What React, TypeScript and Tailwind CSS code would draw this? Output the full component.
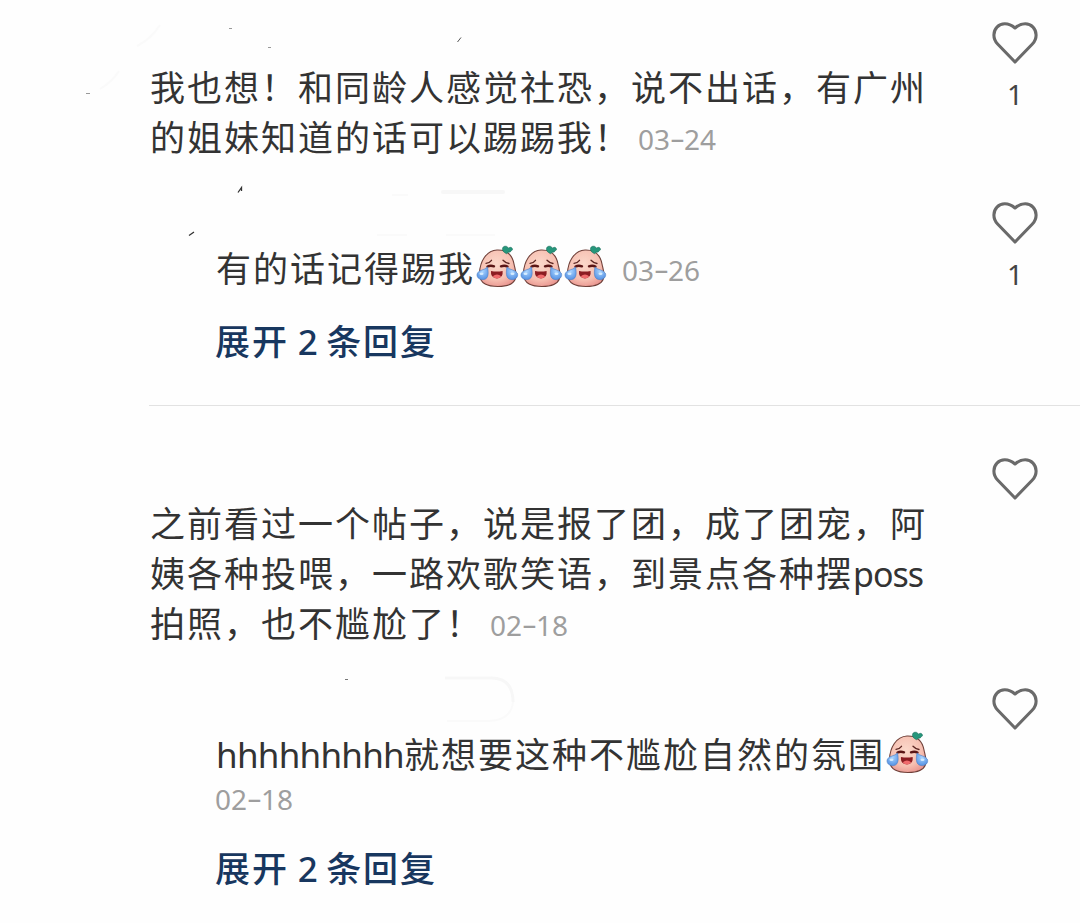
import type { ReactNode } from "react";

const COMMENTS = [
  {
    id: "1",
    lines: ["我也想！和同龄人感觉社恐，说不出话，有广州", "的姐妹知道的话可以踢踢我！"],
    date: "03-24",
    likes: 1,
    reply: { text: "有的话记得踢我", laughs: 3, date: "03-26", dateBelow: false, likes: 1, more: 2 },
  },
  {
    id: "2",
    lines: ["之前看过一个帖子，说是报了团，成了团宠，阿", "姨各种投喂，一路欢歌笑语，到景点各种摆poss", "拍照，也不尴尬了！"],
    date: "02-18",
    likes: 0,
    reply: { text: "hhhhhhhhh就想要这种不尴尬自然的氛围", laughs: 1, date: "02-18", dateBelow: true, likes: 0, more: 2 },
  },
];

function HeartIcon() {
  return (
    <svg width="46" height="43" viewBox="0 0 46 43" fill="none" className="block">
      <path
        d="M23 7 C19.800 4.200 16.500 2.800 12.800 2.800 C6.500 2.800 1.900 7.800 1.900 14 C1.900 17.600 3.300 20.600 5.600 23 L23 41 L40.400 23 C42.700 20.600 44.100 17.600 44.100 14 C44.100 7.800 39.500 2.800 33.200 2.800 C29.500 2.800 26.200 4.200 23 7 Z"
        stroke="#6a6a6a"
        strokeWidth="3.1"
        strokeLinejoin="round"
      />
    </svg>
  );
}

function LaughCry() {
  return (
    <svg width="44" height="44" viewBox="0 0 44 44" className="block shrink-0">
      <defs>
        <radialGradient id="skin" cx="45%" cy="38%" r="68%">
          <stop offset="0" stopColor="#fbd8ca" />
          <stop offset=".65" stopColor="#f6bfb1" />
          <stop offset="1" stopColor="#e8918c" />
        </radialGradient>
        <radialGradient id="tear" cx="50%" cy="35%" r="65%">
          <stop offset="0" stopColor="#a9d4ff" />
          <stop offset="1" stopColor="#5592e4" />
        </radialGradient>
      </defs>
      <path d="M3.500 28 C4 17 10 5.500 21 5 C32 4.600 36.500 11 38 19 C39 24 41 29 39.500 33.500 C37.500 39.500 30 41.500 22 41.500 C13 41.500 3 39.500 3.500 28Z" fill="url(#skin)" stroke="#70413a" strokeWidth="1.1" />
      <path d="M28.500 7.500 C25.500 5.500 26 1.500 29 1.200 C31.300 1 32 2.500 32.500 3.200 C34.500 1.500 36.500 2.500 36.500 4.700 C35.500 5 35 7.500 32.500 7.200 L30.500 8.700Z" fill="#26967b" stroke="#176b59" strokeWidth=".6" />
      <path d="M10 18.300 Q13.500 18 15.500 15.300 M27 15.300 Q29.500 18 33 18.500" stroke="#5b2420" strokeWidth="1.300" fill="none" strokeLinecap="round" />
      <path d="M11.500 21.500 Q14.500 20 18 21.300 M25 21.300 Q28.500 20 31.500 21.500" stroke="#5a1515" strokeWidth="2.400" fill="none" strokeLinecap="round" />
      <path d="M15 26 Q20.800 27.200 26.600 26 Q27.500 33 21 33.500 Q14.200 33 15 26Z" fill="#8c1c22" />
      <path d="M16.800 31.200 Q21 28 25.200 31.200 Q23.500 33.400 21 33.400 Q18.200 33.400 16.800 31.200Z" fill="#f06a6c" />
      <path d="M11.500 22 C12.500 27 13 33.500 8 34.500 C3 35.500 -.3 31.500 1.500 28 C3.500 24.500 8 25.500 11.500 22Z" fill="url(#tear)" stroke="#4d80c4" strokeWidth=".6" />
      <path d="M31 22 C30 27 29.500 33.500 34.500 34.500 C39.500 35.500 43 31.500 41.200 28 C39.200 24.500 34.500 25.500 31 22Z" fill="url(#tear)" stroke="#4d80c4" strokeWidth=".6" />
      <ellipse cx="5.500" cy="28.800" rx="2" ry="1.300" fill="#d5ecff" />
      <ellipse cx="36.500" cy="28.800" rx="2" ry="1.300" fill="#d5ecff" />
    </svg>
  );
}

// Latin runs sit tighter than the Chinese glyphs, most of all at the end of a full line
function Text({ children }: { children: string }) {
  return (
    <span className="tracking-[2px]">
      {children.split(/([a-z]+)/).map((part, i) => {
        if (!/^[a-z]+$/.test(part)) return part;
        const trailing = children.endsWith(part);
        return <span key={i} className={`font-['Noto_Sans'] leading-none ${trailing ? "text-[34px] tracking-[-1px]" : "text-[35px] tracking-[-0.75px]"}`}>{part}</span>;
      })}
    </span>
  );
}

function DateLabel({ date }: { date: string }) {
  const [month, day] = date.split("-");
  return (
    <span className="flex font-['Noto_Sans'] text-[28px] leading-[40px] text-[#9e9e9e]">
      {month}
      <span className="w-[14px] flex justify-center pb-1"><span className="h-9 leading-[36px] scale-x-[1.7]">-</span></span>
      {day}
    </span>
  );
}

function Row({ likes, className, children }: { likes: number; className: string; children: ReactNode }) {
  return (
    <div className={`flex items-start justify-between ${className}`}>
      <div className="pt-[61px] whitespace-nowrap">{children}</div>
      <div className="w-[130px] shrink-0 flex flex-col items-center pt-[21px]">
        <HeartIcon />
        {likes > 0 && <span className="h-10 mt-[10px] font-['Noto_Sans'] text-[28px] leading-[40px] text-[#444444]">{likes}</span>}
      </div>
    </div>
  );
}

// Leftover strokes around the erased user names
function Smudges() {
  return (
    <svg width="1080" height="923" viewBox="0 0 1080 923" fill="none" className="absolute inset-0 pointer-events-none">
      <path d="M137 46 Q151 39 160 25 M100 89 Q112 82 119 71" stroke="#fafafa" strokeWidth="2" />
      <path d="M86 93.500 h4 M229 28.500 h3 M268 47.500 h3" stroke="#999999" />
      <path d="M457.500 42 L461 37.500" stroke="#555555" />
      <path d="M238 192.500 L241.500 187.500 V191 M189 235.500 L194 232" stroke="#333333" strokeWidth="1.300" />
      <path d="M345 679.500 h3" stroke="#777777" />
      <path d="M443 192 H503" stroke="#f7f7f7" strokeWidth="4" strokeLinecap="round" />
      <path d="M392 195 H408 M377 235 H407 M446 235 H495" stroke="#fafafa" strokeWidth="2" />
      <path d="M445 678 H491 Q513 678 513 702" stroke="#f7f7f7" strokeWidth="3" />
      <path d="M513 702 Q511 721 487 721 H447" stroke="#fafafa" strokeWidth="2" />
    </svg>
  );
}

export default function App() {
  return (
    <div className="relative w-[1080px] h-[923px] overflow-hidden bg-[#fefefe] font-['Noto_Sans_CJK_SC','Noto_Sans',sans-serif] text-[35px] leading-[50px] text-[#333333]">
      {COMMENTS.map((c, i) => (
        <section key={c.id} className={i > 0 ? "pt-[30px]" : ""}>
          <Row likes={c.likes} className="pl-[150px]">
            {c.lines.map((line, n) => (
              <div key={line} className="h-[50px] flex items-center">
                <Text>{line}</Text>
                {n === c.lines.length - 1 && <span className="ml-[7px] pt-1.5"><DateLabel date={c.date} /></span>}
              </div>
            ))}
          </Row>

          <Row likes={c.reply.likes} className="mt-[19px] pl-[216px]">
            <div className="h-[50px] mt-px flex items-center">
              <Text>{c.reply.text}</Text>
              <span className="flex ml-px pb-px">
                {Array.from({ length: c.reply.laughs }, (_, n) => <LaughCry key={n} />)}
              </span>
              {!c.reply.dateBelow && <span className="ml-[14px] pt-1.5"><DateLabel date={c.reply.date} /></span>}
            </div>
            {c.reply.dateBelow && <div className="h-10 mt-px flex items-center -ml-px"><DateLabel date={c.reply.date} /></div>}
            <button className="block -ml-px mt-[23px] font-medium text-[#18375f] tracking-[1.9px]">
              展开<span className="font-['Noto_Sans'] font-medium tracking-[-0.3px]"> {c.reply.more} </span>条回复
            </button>
          </Row>

          {i < COMMENTS.length - 1 && <div className="mt-[38px] ml-[149px] h-px bg-[#e2e2e2]" />}
        </section>
      ))}
      <Smudges />
    </div>
  );
}
